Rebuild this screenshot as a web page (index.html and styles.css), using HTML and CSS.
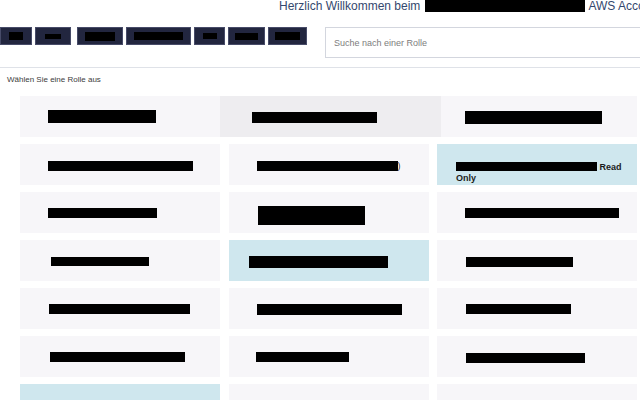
FILE: index.html
```html
<!DOCTYPE html>
<html lang="de">
<head>
<meta charset="utf-8">
<title>AWS Rollen</title>
<link rel="stylesheet" href="styles.css">
</head>
<body>
<header class="top">
  <div class="title">Herzlich Willkommen beim <span class="redact title-redact"></span> AWS Account</div>
  <div class="toolbar">
    <nav class="nav">
      <a class="nav-btn w32"><span class="redact" style="width:14px;height:8px"></span></a>
      <a class="nav-btn w35"><span class="redact" style="width:16px;height:5px"></span></a>
      <a class="nav-btn w45"><span class="redact" style="width:30px;height:9px"></span></a>
      <a class="nav-btn w65"><span class="redact" style="width:49px;height:8px"></span></a>
      <a class="nav-btn w31"><span class="redact" style="width:14px;height:6px"></span></a>
      <a class="nav-btn w37"><span class="redact" style="width:23px;height:7px"></span></a>
      <a class="nav-btn w39"><span class="redact" style="width:25px;height:8px"></span></a>
    </nav>
    <div class="search"><input class="search-input" type="text" placeholder="Suche nach einer Rolle"></div>
  </div>
</header>
<div class="divider"></div>
<p class="label">Wählen Sie eine Rolle aus</p>
<main class="grid">
  <div class="card"><span class="redact" style="width:108px;height:13px"></span></div>
  <div class="card hover"><span class="redact" style="width:125px;height:11px;margin-top:2px"></span></div>
  <div class="card"><span class="redact" style="width:137px;height:13px;margin-top:2px"></span></div>

  <div class="card"><span class="redact" style="width:145px;height:10px;margin-top:2px"></span></div>
  <div class="card"><span class="redact" style="width:141px;height:10px;margin-top:2px"></span><span class="paren">)</span></div>
  <div class="card selected wrap"><div class="wrap-text"><span class="redact" style="width:141px;height:9px"></span> Read Only</div></div>

  <div class="card"><span class="redact" style="width:109px;height:10px"></span></div>
  <div class="card"><span class="redact" style="width:107px;height:19px;margin-top:6px;margin-left:1px"></span></div>
  <div class="card"><span class="redact" style="width:154px;height:10px"></span></div>

  <div class="card"><span class="redact" style="width:98px;height:9px;margin-left:3px;margin-top:2px"></span></div>
  <div class="card selected"><span class="redact" style="width:139px;height:12px;margin-top:3px"></span></div>
  <div class="card"><span class="redact" style="width:107px;height:10px;margin-top:2px;margin-left:1px"></span></div>

  <div class="card"><span class="redact" style="width:141px;height:10px;margin-left:1px"></span></div>
  <div class="card"><span class="redact" style="width:145px;height:11px;margin-top:1px"></span></div>
  <div class="card"><span class="redact" style="width:105px;height:10px;margin-left:1px"></span></div>

  <div class="card"><span class="redact" style="width:135px;height:10px;margin-left:2px"></span></div>
  <div class="card"><span class="redact" style="width:93px;height:10px;margin-left:-1px"></span></div>
  <div class="card"><span class="redact" style="width:119px;height:10px;margin-left:1px;margin-top:2px"></span></div>

  <div class="card selected"></div>
  <div class="card"></div>
  <div class="card"></div>
</main>
</body>
</html>
```

FILE: styles.css
```css
html, body {
  margin: 0;
  padding: 0;
  background: #ffffff;
  font-family: "Liberation Sans", Arial, sans-serif;
  overflow: hidden;
}

.top {
  display: flex;
  flex-direction: column;
}

.title {
  padding-left: 279px;
  font-size: 12px;
  line-height: 13px;
  height: 13px;
  color: #34486e;
  white-space: nowrap;
  overflow: hidden;
}

.redact {
  display: inline-block;
  background: #000000;
  vertical-align: top;
  flex: none;
}

.title-redact {
  width: 160px;
  height: 12px;
  margin: 0 1px 0 1px;
}

.toolbar {
  display: flex;
  align-items: flex-start;
  margin-top: 14px;
}

.nav {
  display: flex;
  gap: 3px;
  width: 325px;
  flex: none;
}

.nav-btn {
  display: flex;
  align-items: center;
  justify-content: center;
  height: 18px;
  box-sizing: border-box;
  background: #22263f;
  border: 1px solid #474b68;
}

.w32 { width: 32px; }
.w35 { width: 36px; }
.w45 { width: 46px; margin-left: 3px; }
.w65 { width: 65px; }
.w31 { width: 31px; }
.w37 { width: 37px; }
.w39 { width: 39px; }

.search {
  flex: 1;
  min-width: 0;
}

.search-input {
  display: block;
  box-sizing: border-box;
  width: 340px;
  height: 31px;
  margin: 0;
  padding: 0 0 0 8px;
  border: 1px solid #d3d6de;
  border-right: none;
  font-family: "Liberation Sans", Arial, sans-serif;
  font-size: 9px;
  color: #333;
  outline: none;
  background: #fff;
}

.search-input::placeholder {
  color: #7d7d7d;
}

.divider {
  height: 1px;
  background: #dfe2e8;
  margin-top: 9px;
}

.label {
  margin: 7px 0 0 7px;
  font-size: 8px;
  line-height: 10px;
  color: #3c3c3c;
}

.grid {
  display: grid;
  grid-template-columns: repeat(3, 200px);
  column-gap: 8.5px;
  row-gap: 7px;
  grid-auto-rows: 41px;
  padding-left: 20px;
  margin-top: 11px;
}

.card {
  display: flex;
  align-items: center;
  box-sizing: border-box;
  padding-left: 28px;
  background: #f7f6f9;
  color: #111;
  font-size: 9px;
}

.card.hover {
  background: #eeedf0;
  margin: 0 -12px 0 -9px;
  padding-left: 32px;
  position: relative;
  z-index: 1;
}

.card.selected {
  background: #cfe7ee;
  padding-left: 20px;
}

.card.wrap {
  align-items: flex-start;
  padding-left: 19px;
  padding-right: 14px;
  padding-top: 18px;
}

.wrap-text {
  font-weight: bold;
  font-size: 9px;
  line-height: 11px;
  color: #1b1b1b;
}

.paren {
  font-size: 9px;
  line-height: 10px;
  margin-top: 2px;
  color: #333;
}
```
